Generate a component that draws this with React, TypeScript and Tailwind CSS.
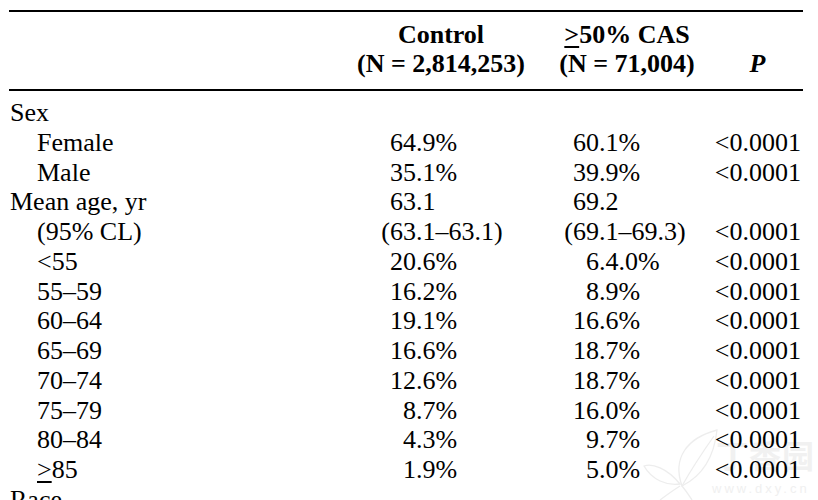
import React from "react";

type Row = {
  label: React.ReactNode;
  indent?: boolean;
  c?: [string, string];
  s?: [string, string];
  p?: boolean;
};

const GE = ({ bold }: { bold?: boolean }) => (
  <span className={"underline decoration-[1.5px] underline-offset-[3px] " + (bold ? "font-bold" : "")}>&gt;</span>
);

const rows: Row[] = [
  { label: "Sex" },
  { label: "Female", indent: true, c: ["64", ".9%"], s: ["60", ".1%"], p: true },
  { label: "Male", indent: true, c: ["35", ".1%"], s: ["39", ".9%"], p: true },
  { label: "Mean age, yr", c: ["63", ".1"], s: ["69", ".2"] },
  { label: "(95% CL)", indent: true, c: ["(63", ".1–63.1)"], s: ["(69", ".1–69.3)"], p: true },
  { label: "<55", indent: true, c: ["20", ".6%"], s: ["6", ".4.0%"], p: true },
  { label: "55–59", indent: true, c: ["16", ".2%"], s: ["8", ".9%"], p: true },
  { label: "60–64", indent: true, c: ["19", ".1%"], s: ["16", ".6%"], p: true },
  { label: "65–69", indent: true, c: ["16", ".6%"], s: ["18", ".7%"], p: true },
  { label: "70–74", indent: true, c: ["12", ".6%"], s: ["18", ".7%"], p: true },
  { label: "75–79", indent: true, c: ["8", ".7%"], s: ["16", ".0%"], p: true },
  { label: "80–84", indent: true, c: ["4", ".3%"], s: ["9", ".7%"], p: true },
  {
    label: (
      <>
        <GE />
        85
      </>
    ),
    indent: true,
    c: ["1", ".9%"],
    s: ["5", ".0%"],
    p: true,
  },
  { label: "Race" },
];

function Dec({ v, w }: { v?: [string, string]; w: string }) {
  if (!v) return null;
  return (
    <div className="flex">
      <span className={w + " text-right"}>{v[0]}</span>
      <span>{v[1]}</span>
    </div>
  );
}

function Watermark() {
  return (
    <div className="absolute z-0 left-[642px] top-[428px] w-[176px] h-[72px] pointer-events-none">
      <svg width="90" height="72" viewBox="0 0 90 72" className="absolute left-0 top-0" fill="none" stroke="#ededed" strokeWidth="1.3">
        <path d="M40 58 C30 30 45 10 75 2 C72 30 60 48 40 58 Z" />
        <path d="M40 58 C50 40 60 25 72 8" />
        <path d="M38 56 C25 40 10 35 2 38 C10 52 25 58 38 56 Z" />
        <path d="M38 58 C30 63 22 69 18 72" />
        <path d="M40 58 C45 64 48 69 50 72" />
      </svg>
      <div className="absolute left-[74px] top-[10px] text-[32px] leading-none text-[#f1f1f1] font-bold font-['Noto_Sans_CJK_SC',sans-serif] tracking-[1px]">
        丁香园
      </div>
      <div className="absolute left-[70px] top-[54px] text-[13px] leading-none text-[#f0f0f0] font-['Liberation_Sans',sans-serif] tracking-[3px]">
        www.dxy.cn
      </div>
    </div>
  );
}

export default function App() {
  return (
    <div className="relative w-[818px] h-[500px] overflow-hidden bg-white text-black font-['Liberation_Serif',serif] text-[26px]">
      <Watermark />
      <div className="relative z-10 ml-[9px] w-[794px] pt-[10px]">
        <div className="h-[2px] bg-black" />
        <div className="flex pt-[9px] pb-[11px] leading-[28.5px] font-bold">
          <div className="w-[331px]" />
          <div className="w-[202px] flex flex-col items-center">
            <div>Control</div>
            <div>(N = 2,814,253)</div>
          </div>
          <div className="w-[170px] flex flex-col items-center">
            <div>
              <GE bold />
              50% CAS
            </div>
            <div>(N = 71,004)</div>
          </div>
          <div className="w-[91px] flex flex-col items-center">
            <div>&nbsp;</div>
            <div className="italic">P</div>
          </div>
        </div>
        <div className="h-[2px] bg-black" />
        <div className="pt-[7px] leading-[29.75px]">
          {rows.map((r, i) => (
            <div key={i} className="flex">
              <div className={"w-[331px] " + (r.indent ? "pl-[28px]" : "pl-[1px]")}>{r.label}</div>
              <div className="w-[200px]">
                <Dec v={r.c} w="w-[76px]" />
              </div>
              <div className="w-[172px]">
                <Dec v={r.s} w="w-[59px]" />
              </div>
              <div className="w-[91px] text-right pr-[2px]">{r.p ? "<0.0001" : ""}</div>
            </div>
          ))}
        </div>
      </div>
    </div>
  );
}
